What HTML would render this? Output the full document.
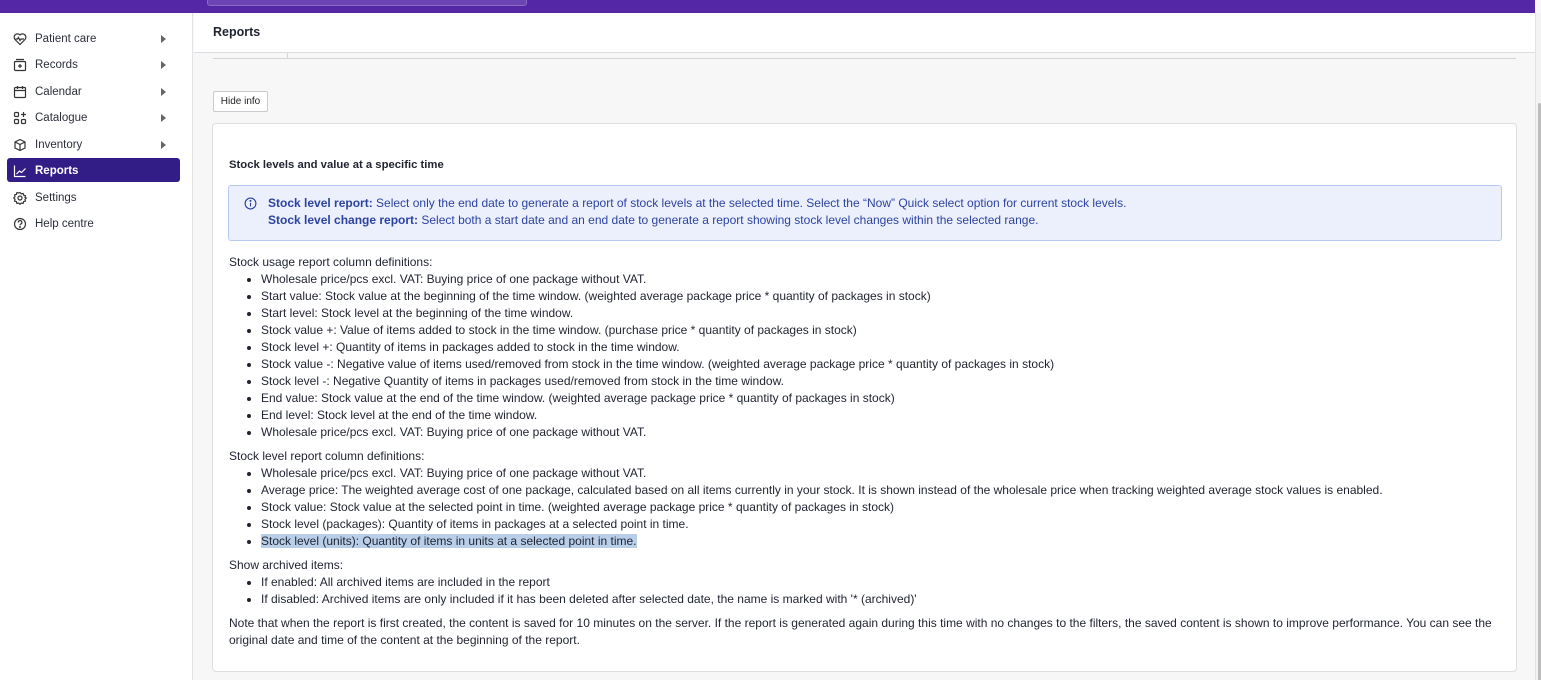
<!DOCTYPE html>
<html><head><meta charset="utf-8"><style>
*{box-sizing:border-box;margin:0;padding:0}
html,body{width:1541px;height:680px;overflow:hidden}
body{font-family:"Liberation Sans",sans-serif;background:#f7f7f8;color:#1f2330;position:relative;font-size:11px}
.top{position:absolute;left:0;top:0;width:1535px;height:13px;background:#5427a6}
.search{position:absolute;left:207px;top:-2px;width:320px;height:8px;background:#6c45b5;border:1px solid #8a6bc6;border-radius:3px}
.side{position:absolute;left:0;top:13px;width:193px;height:667px;background:#fff;border-right:1px solid #e3e3e7}
.item{position:absolute;left:7px;width:173px;height:24px;font-size:11.5px;color:#2b2f3a}
.item svg{position:absolute;left:6px;top:6px}
.item span{position:absolute;left:28px;top:6px;line-height:14px}
.item .ar{position:absolute;left:154px;top:9px;width:0;height:0;border-left:5px solid #666;border-top:4px solid transparent;border-bottom:4px solid transparent}
.item.act{background:#321c86;color:#fff;border-radius:3px;font-weight:bold}
.hdr{position:absolute;left:194px;top:13px;width:1341px;height:40px;background:#fff;border-bottom:1px solid #dcdce0}
.hdr h1{position:absolute;left:19px;top:12px;font-size:12.5px;font-weight:bold;color:#1f2330}
.tabline{position:absolute;left:213px;top:53px;width:1303px;height:6px;border-bottom:1px solid #d4d4d8}
.tabline i{position:absolute;left:74px;top:0;height:6px;border-left:1px solid #d4d4d8}
.sb{position:absolute;left:1535px;top:13px;width:6px;height:667px;background:#f3f3f3;border-left:1px solid #e3e3e3}
.sb i{position:absolute;left:2px;top:90px;width:3px;height:580px;background:#bdbdbd;border-radius:2px}
.btn{position:absolute;left:213px;top:91px;width:55px;height:21px;background:#fff;border:1px solid #c9c9cf;border-radius:2px;font-size:10px;text-align:center;line-height:19px;color:#222}
.card{position:absolute;left:212px;top:123px;width:1305px;height:549px;background:#fff;border:1px solid #dedee2;border-radius:4px}
.card h2{position:absolute;left:16px;top:35px;font-size:11.3px;font-weight:bold}
.info{position:absolute;left:15px;top:61px;width:1274px;height:56px;background:#ecf0fd;border:1px solid #b8c8f0;border-radius:3px;color:#2c43a0;font-size:12px;line-height:17px;padding:9px 0 0 39px}
.info svg{position:absolute;left:15px;top:11px}
.body{position:absolute;left:16px;top:130px;width:1274px;line-height:17px;font-size:12px;color:#1f2330}
.body ul{margin:0 0 7px 32px}
.body p{margin:0}
.hl{background:#b9cfe9}
</style></head><body>
<div class="top"><div class="search"></div></div>
<div class="side">
<div class="item" style="top:13px"><svg width="14" height="14" viewBox="0 0 14 14" fill="none" stroke="#333" stroke-width="1.2"><path d="M7 12.5L2 7.5A3 3 0 0 1 7 3a3 3 0 0 1 5 4.5z"/><path d="M2.5 7h2l1-1.5 1.5 3 1-1.5h3"/></svg><span>Patient care</span><i class="ar"></i></div>
<div class="item" style="top:39px"><svg width="14" height="14" viewBox="0 0 14 14" fill="none" stroke="#333" stroke-width="1.2"><rect x="1.5" y="3.5" width="11" height="9" rx="1"/><path d="M3 1.5h8M5 8h4M7 6v4"/></svg><span>Records</span><i class="ar"></i></div>
<div class="item" style="top:66px"><svg width="14" height="14" viewBox="0 0 14 14" fill="none" stroke="#333" stroke-width="1.2"><rect x="1.5" y="2.5" width="11" height="10" rx="1"/><path d="M1.5 5.5h11M4.5 1v3M9.5 1v3"/></svg><span>Calendar</span><i class="ar"></i></div>
<div class="item" style="top:92px"><svg width="14" height="14" viewBox="0 0 14 14" fill="none" stroke="#333" stroke-width="1.2"><rect x="1.5" y="1.5" width="4" height="4" rx="1"/><rect x="1.5" y="8.5" width="4" height="4" rx="1"/><rect x="8.5" y="8.5" width="4" height="4" rx="1"/><path d="M10.5 1v5M8 3.5h5"/></svg><span>Catalogue</span><i class="ar"></i></div>
<div class="item" style="top:119px"><svg width="14" height="14" viewBox="0 0 14 14" fill="none" stroke="#333" stroke-width="1.2"><path d="M7 1.5l5 2.5v6L7 12.5 2 10V4z"/><path d="M2 4l5 2.5L12 4M7 6.5v6"/></svg><span>Inventory</span><i class="ar"></i></div>
<div class="item act" style="top:145px"><svg width="14" height="14" viewBox="0 0 14 14" fill="none" stroke="#fff" stroke-width="1.2"><path d="M1.5 1.5v11h11"/><path d="M3.5 10l3-3 2 1.5 4-4"/></svg><span>Reports</span></div>
<div class="item" style="top:172px"><svg width="14" height="14" viewBox="0 0 14 14" fill="none" stroke="#333" stroke-width="1.2"><circle cx="7" cy="7" r="2"/><path d="M7 1.5l1.3 1.3 1.8-.4.5 1.8 1.8.5-.4 1.8L13.3 7l-1.3 1.3.4 1.8-1.8.5-.5 1.8-1.8-.4L7 13.3l-1.3-1.3-1.8.4-.5-1.8-1.8-.5.4-1.8L.7 7l1.3-1.3-.4-1.8 1.8-.5.5-1.8 1.8.4z"/></svg><span>Settings</span></div>
<div class="item" style="top:198px"><svg width="14" height="14" viewBox="0 0 14 14" fill="none" stroke="#333" stroke-width="1.2"><circle cx="7" cy="7" r="5.5"/><path d="M5.3 5.5a1.8 1.8 0 1 1 2.4 1.6c-.5.3-.7.6-.7 1.2"/><circle cx="7" cy="10" r=".4" fill="#333"/></svg><span>Help centre</span></div>
</div>
<div class="hdr"><h1>Reports</h1></div>
<div class="tabline"><i></i></div>
<div class="sb"><i></i></div>
<div class="btn">Hide info</div>
<div class="card">
<h2>Stock levels and value at a specific time</h2>
<div class="info"><svg width="13" height="13" viewBox="0 0 14 14" fill="none" stroke="#2c43a0" stroke-width="1.2"><circle cx="7" cy="7" r="5.8"/><path d="M7 6.2v4"/><circle cx="7" cy="4.2" r=".5" fill="#2c43a0"/></svg>
<b>Stock level report:</b> Select only the end date to generate a report of stock levels at the selected time. Select the “Now” Quick select option for current stock levels.<br>
<b>Stock level change report:</b> Select both a start date and an end date to generate a report showing stock level changes within the selected range.</div>
<div class="body">
<p>Stock usage report column definitions:</p>
<ul>
<li>Wholesale price/pcs excl. VAT: Buying price of one package without VAT.</li>
<li>Start value: Stock value at the beginning of the time window. (weighted average package price * quantity of packages in stock)</li>
<li>Start level: Stock level at the beginning of the time window.</li>
<li>Stock value +: Value of items added to stock in the time window. (purchase price * quantity of packages in stock)</li>
<li>Stock level +: Quantity of items in packages added to stock in the time window.</li>
<li>Stock value -: Negative value of items used/removed from stock in the time window. (weighted average package price * quantity of packages in stock)</li>
<li>Stock level -: Negative Quantity of items in packages used/removed from stock in the time window.</li>
<li>End value: Stock value at the end of the time window. (weighted average package price * quantity of packages in stock)</li>
<li>End level: Stock level at the end of the time window.</li>
<li>Wholesale price/pcs excl. VAT: Buying price of one package without VAT.</li>
</ul>
<p>Stock level report column definitions:</p>
<ul>
<li>Wholesale price/pcs excl. VAT: Buying price of one package without VAT.</li>
<li>Average price: The weighted average cost of one package, calculated based on all items currently in your stock. It is shown instead of the wholesale price when tracking weighted average stock values is enabled.</li>
<li>Stock value: Stock value at the selected point in time. (weighted average package price * quantity of packages in stock)</li>
<li>Stock level (packages): Quantity of items in packages at a selected point in time.</li>
<li><span class="hl">Stock level (units): Quantity of items in units at a selected point in time.</span></li>
</ul>
<p>Show archived items:</p>
<ul>
<li>If enabled: All archived items are included in the report</li>
<li>If disabled: Archived items are only included if it has been deleted after selected date, the name is marked with '* (archived)'</li>
</ul>
<p>Note that when the report is first created, the content is saved for 10 minutes on the server. If the report is generated again during this time with no changes to the filters, the saved content is shown to improve performance. You can see the<br>original date and time of the content at the beginning of the report.</p>
</div>
</div>
</body></html>
